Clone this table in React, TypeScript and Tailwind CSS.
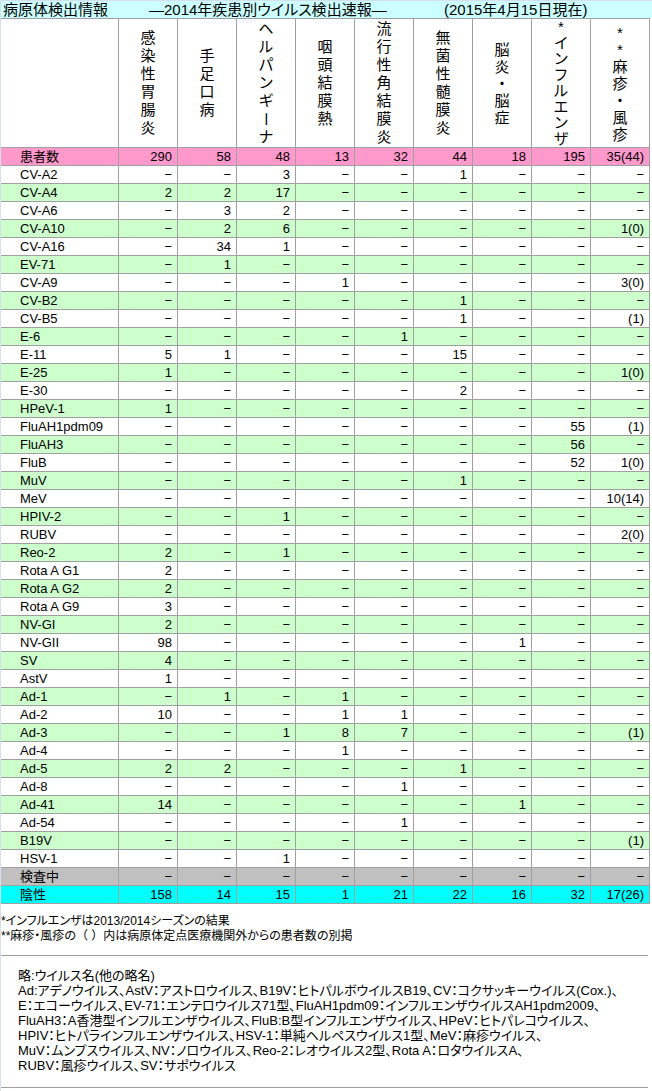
import React from "react";

type Col = { chars: string[]; lh: string };

const cols: Col[] = [
  { chars: ["感", "染", "性", "胃", "腸", "炎"], lh: "h-[18px] leading-[18px]" },
  { chars: ["手", "足", "口", "病"], lh: "h-[18px] leading-[18px]" },
  { chars: ["ヘ", "ル", "パ", "ン", "ギ", "ー", "ナ"], lh: "h-[18px] leading-[18px]" },
  { chars: ["咽", "頭", "結", "膜", "熱"], lh: "h-[18px] leading-[18px]" },
  { chars: ["流", "行", "性", "角", "結", "膜", "炎"], lh: "h-[18px] leading-[18px]" },
  { chars: ["無", "菌", "性", "髄", "膜", "炎"], lh: "h-[18px] leading-[18px]" },
  { chars: ["脳", "炎", "・", "脳", "症"], lh: "h-[17px] leading-[17px]" },
  { chars: ["*", "イ", "ン", "フ", "ル", "エ", "ン", "ザ"], lh: "h-[16px] leading-[16px]" },
  { chars: ["*", "*", "麻", "疹", "・", "風", "疹"], lh: "h-[17px] leading-[17px]" },
];

const d = "-";

const rows: [string, string[]][] = [
  ["CV-A2", [d, d, "3", d, d, "1", d, d, d]],
  ["CV-A4", ["2", "2", "17", d, d, d, d, d, d]],
  ["CV-A6", [d, "3", "2", d, d, d, d, d, d]],
  ["CV-A10", [d, "2", "6", d, d, d, d, d, "1(0)"]],
  ["CV-A16", [d, "34", "1", d, d, d, d, d, d]],
  ["EV-71", [d, "1", d, d, d, d, d, d, d]],
  ["CV-A9", [d, d, d, "1", d, d, d, d, "3(0)"]],
  ["CV-B2", [d, d, d, d, d, "1", d, d, d]],
  ["CV-B5", [d, d, d, d, d, "1", d, d, "(1)"]],
  ["E-6", [d, d, d, d, "1", d, d, d, d]],
  ["E-11", ["5", "1", d, d, d, "15", d, d, d]],
  ["E-25", ["1", d, d, d, d, d, d, d, "1(0)"]],
  ["E-30", [d, d, d, d, d, "2", d, d, d]],
  ["HPeV-1", ["1", d, d, d, d, d, d, d, d]],
  ["FluAH1pdm09", [d, d, d, d, d, d, d, "55", "(1)"]],
  ["FluAH3", [d, d, d, d, d, d, d, "56", d]],
  ["FluB", [d, d, d, d, d, d, d, "52", "1(0)"]],
  ["MuV", [d, d, d, d, d, "1", d, d, d]],
  ["MeV", [d, d, d, d, d, d, d, d, "10(14)"]],
  ["HPIV-2", [d, d, "1", d, d, d, d, d, d]],
  ["RUBV", [d, d, d, d, d, d, d, d, "2(0)"]],
  ["Reo-2", ["2", d, "1", d, d, d, d, d, d]],
  ["Rota A G1", ["2", d, d, d, d, d, d, d, d]],
  ["Rota A G2", ["2", d, d, d, d, d, d, d, d]],
  ["Rota A G9", ["3", d, d, d, d, d, d, d, d]],
  ["NV-GI", ["2", d, d, d, d, d, d, d, d]],
  ["NV-GII", ["98", d, d, d, d, d, "1", d, d]],
  ["SV", ["4", d, d, d, d, d, d, d, d]],
  ["AstV", ["1", d, d, d, d, d, d, d, d]],
  ["Ad-1", [d, "1", d, "1", d, d, d, d, d]],
  ["Ad-2", ["10", d, d, "1", "1", d, d, d, d]],
  ["Ad-3", [d, d, "1", "8", "7", d, d, d, "(1)"]],
  ["Ad-4", [d, d, d, "1", d, d, d, d, d]],
  ["Ad-5", ["2", "2", d, d, d, "1", d, d, d]],
  ["Ad-8", [d, d, d, d, "1", d, d, d, d]],
  ["Ad-41", ["14", d, d, d, d, d, "1", d, d]],
  ["Ad-54", [d, d, d, d, "1", d, d, d, d]],
  ["B19V", [d, d, d, d, d, d, d, d, "(1)"]],
  ["HSV-1", [d, d, "1", d, d, d, d, d, d]],
];

const total = ["290", "58", "48", "13", "32", "44", "18", "195", "35(44)"];
const pending = [d, d, d, d, d, d, d, d, d];
const negative = ["158", "14", "15", "1", "21", "22", "16", "32", "17(26)"];

function Row({ label, values, bg }: { label: string; values: string[]; bg: string }) {
  return (
    <>
      <div className={`${bg} h-[17px] leading-[17px] pl-[19px] whitespace-nowrap`}>{label}</div>
      {values.map((v, i) => (
        <div key={i} className={`${bg} h-[17px] leading-[17px] text-right pr-[5px] whitespace-nowrap`}>
          {v === "-" ? "−" : v}
        </div>
      ))}
    </>
  );
}

const notes = [
  "略:ウイルス名(他の略名)",
  "Ad:アデノウイルス、AstV：アストロウイルス、B19V：ヒトパルボウイルスB19、CV：コクサッキーウイルス(Cox.)、",
  "E：エコーウイルス、EV-71：エンテロウイルス71型、FluAH1pdm09：インフルエンザウイルスAH1pdm2009、",
  "FluAH3：A香港型インフルエンザウイルス、FluB:B型インフルエンザウイルス、HPeV：ヒトパレコウイルス、",
  "HPIV：ヒトパラインフルエンザウイルス、HSV-1：単純ヘルペスウイルス1型、MeV：麻疹ウイルス、",
  "MuV：ムンプスウイルス、NV：ノロウイルス、Reo-2：レオウイルス2型、Rota A：ロタウイルスA、",
  "RUBV：風疹ウイルス、SV：サポウイルス",
];

export default function App() {
  return (
    <div className="w-[652px] min-h-[1091px] bg-white text-black border-l border-t border-[#d6dfec] font-['Liberation_Sans','Noto_Sans_CJK_JP',sans-serif] [font-feature-settings:'palt']">
      {/* title */}
      <div className="h-[17px] bg-[#ccffff] flex items-center text-[15px] leading-[17px] whitespace-nowrap">
        <span className="w-[148px] pl-[2px]">病原体検出情報</span>
        <span className="w-[295px]">―2014年疾患別ウイルス検出速報―</span>
        <span>(2015年4月15日現在)</span>
      </div>

      {/* table */}
      <div className="w-[649px] grid grid-cols-[117px_repeat(9,58px)] gap-px bg-[#a0a0a0] border-t border-r border-b border-[#a0a0a0] text-[13px]">
        <div className="bg-white h-[128px]" />
        {cols.map((c, i) => (
          <div key={i} className="bg-white h-[128px] flex items-center justify-center text-[15px]">
            <div className="flex flex-col items-center">
              {c.chars.map((ch, j) =>
                ch === "ー" ? (
                  <span key={j} className={`flex items-center justify-center ${c.lh}`}>
                    <span className="[writing-mode:vertical-rl] font-['Noto_Sans_CJK_JP',sans-serif]">ー</span>
                  </span>
                ) : (
                  <span key={j} className={`block ${c.lh}`}>
                    {ch}
                  </span>
                )
              )}
            </div>
          </div>
        ))}
        <Row label="患者数" values={total} bg="bg-[#ff99cc]" />
        {rows.map(([label, values], i) => (
          <Row key={label} label={label} values={values} bg={i % 2 ? "bg-[#ccffcc]" : "bg-white"} />
        ))}
        <Row label="検査中" values={pending} bg="bg-[#c0c0c0]" />
        <Row label="陰性" values={negative} bg="bg-[#00ffff]" />
      </div>

      {/* footnotes */}
      <div className="pt-[10px] text-[12px] leading-[15px] whitespace-nowrap">
        <div>*インフルエンザは2013/2014シーズンの結果</div>
        <div>
          **麻疹・風疹の<span className="[font-feature-settings:normal]">（ ）</span>内は病原体定点医療機関外からの患者数の別掲
        </div>
      </div>

      {/* legend box */}
      <div className="mt-[11px] w-[647px] border-t border-b border-[#a0a0a0] pt-[12px] pb-[14px] pl-[17px] text-[13px] leading-[15px] whitespace-nowrap">
        {notes.map((n, i) => (
          <div key={i}>{n}</div>
        ))}
      </div>
    </div>
  );
}
